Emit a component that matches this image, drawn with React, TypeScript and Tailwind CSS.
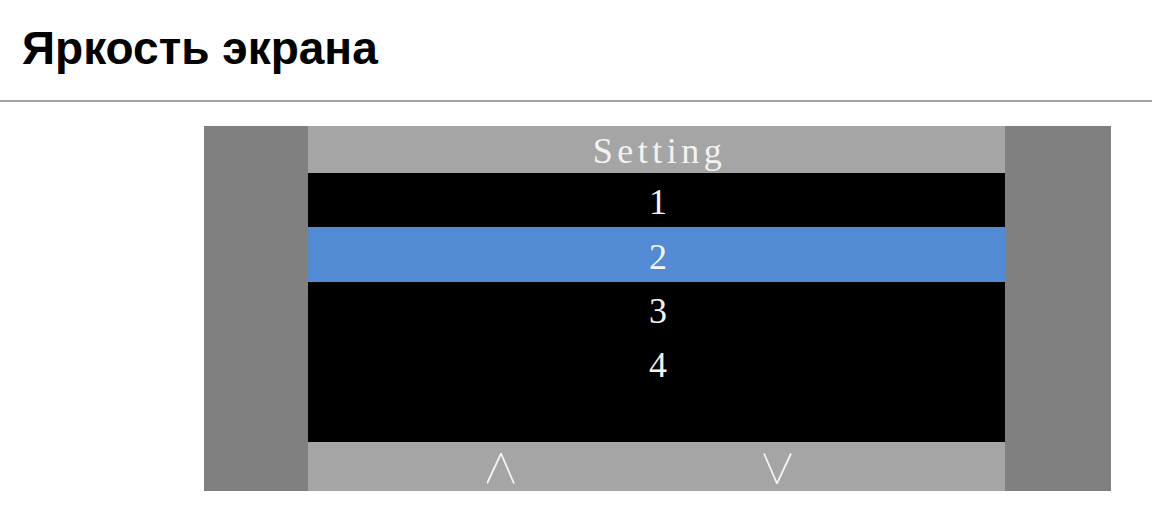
import React from "react";

const serif = { fontFamily: '"Liberation Serif", "Times New Roman", serif' };

function Row({ label, active }: { label: string; active?: boolean }) {
  return (
    <div
      className={`flex items-center justify-center text-[36px] leading-none text-[#f4f4f4] ${
        active ? "bg-[#538ad4]" : "bg-black"
      }`}
      style={{ ...serif, height: active ? 55 : 54 }}
    >
      <span className="pt-[4px] pl-[3px]">{label}</span>
    </div>
  );
}

export default function App() {
  return (
    <div className="w-[1152px] h-[506px] bg-white overflow-hidden">
      <div className="px-[22px] pt-[22px] pb-[26px] border-b-2 border-[#a3a3a3]">
        <h1
          className="text-[46px] leading-[52px] font-bold text-black"
          style={{ fontFamily: '"Liberation Sans", Arial, sans-serif' }}
        >
          Яркость экрана
        </h1>
      </div>
      <div className="pt-[24px] pl-[204px]">
        <div className="flex w-[907px] h-[365px]">
          <div className="w-[104px] bg-[#808080]" />
          <div className="flex flex-col w-[697px]">
            <div
              className="h-[47px] bg-[#a5a5a5] flex items-center justify-center text-[36px] leading-none text-[#f2f2f2] tracking-[4.5px] pl-[6px] pt-[3px]"
              style={serif}
            >
              Setting
            </div>
            <Row label="1" />
            <Row label="2" active />
            <Row label="3" />
            <Row label="4" active={false} />
            <div className="h-[52px] bg-black" />
            <div className="h-[49px] bg-[#a5a5a5] flex items-start pt-[11px] pl-[179px]">
              <svg width="28" height="31" viewBox="0 0 28 31" className="block">
                <polyline
                  points="0,30.5 14,0.5 27,30.5"
                  fill="none"
                  stroke="#f4f4f4"
                  strokeWidth="1.8"
                />
              </svg>
              <svg width="29" height="31" viewBox="0 0 29 31" className="block ml-[248px]">
                <polyline
                  points="1,0.5 14,30.5 28,0.5"
                  fill="none"
                  stroke="#f4f4f4"
                  strokeWidth="1.8"
                />
              </svg>
            </div>
          </div>
          <div className="w-[106px] bg-[#808080]" />
        </div>
      </div>
    </div>
  );
}
